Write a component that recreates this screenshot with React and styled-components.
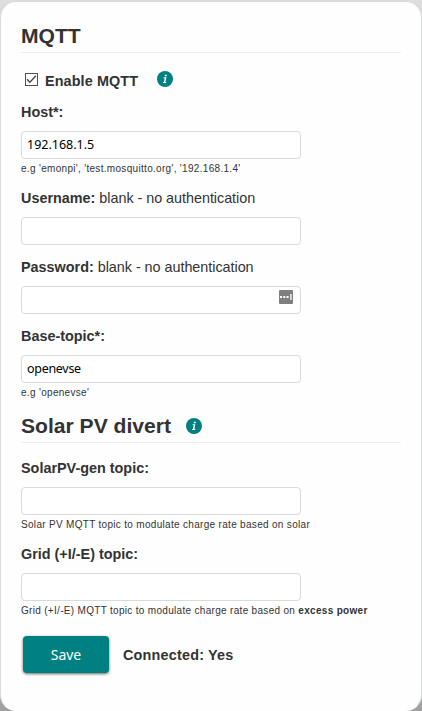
import React, { useState } from "react";
import styled, { createGlobalStyle } from "styled-components";

const Page = createGlobalStyle`
  *, *::before, *::after { box-sizing: border-box; }
  html, body { margin: 0; height: 711px; overflow: hidden; }
  body {
    background: linear-gradient(#dedede, #d2d2d2 40px, #c4c4c4 600px, #a0a0a0);
    color: #333;
    font-family: "Liberation Sans", Arial, sans-serif;
    font-size: 14.4px;
  }
`;

const Card = styled.main`
  width: 422px;
  height: 710px;
  margin-top: 1px;
  padding: 17px 20px 0;
  background: #fefefe;
  border: 1px solid #d9dada;
  border-bottom-color: #fefefe;
  border-radius: 16px;
`;

const Heading = styled.h2`
  display: flex;
  align-items: center;
  gap: 15px;
  height: 34px;
  margin: 0 0 ${(p) => p.$gap}px;
  border-bottom: 1px solid #eee;
  font-size: 21.1px;
  line-height: 30px;
  white-space: nowrap;
`;

const CheckRow = styled.div`
  display: flex;
  align-items: center;
  height: 20px;
  margin-bottom: 12px;
  padding-left: 4px;
`;

const CheckLabel = styled.label`
  display: flex;
  align-items: center;
  gap: 7px;
  margin-right: 19px;
  font-weight: bold;
  line-height: 20px;
  letter-spacing: 0.1px;
  white-space: nowrap;

  span { padding-top: 2px; }
`;

const HiddenCheck = styled.input`
  appearance: none;
  width: 0;
  height: 0;
  margin: 0 -7px 0 0;
`;

const Field = styled.div`
  display: flex;
  flex-direction: column;
  margin-bottom: ${(p) => p.$gap}px;
`;

const Label = styled.label`
  height: 20px;
  margin-bottom: 9px;
  line-height: 20px;
  white-space: nowrap;
`;

const Note = styled.span`
  letter-spacing: -0.04px;
`;

const InputBox = styled.div`
  display: flex;
  align-items: flex-start;
  width: 280px;
  height: 28px;
  padding: 0 7px 0 5px;
  background: #fff;
  border: 1px solid #d9dada;
  border-radius: 4px;
`;

const Input = styled.input`
  flex: 1;
  min-width: 0;
  height: 24px;
  padding: 0;
  background: none;
  border: 0;
  outline: 0;
  color: #000;
  font: 12.5px "Noto Sans", sans-serif;
  letter-spacing: ${(p) => p.$spacing || 0}px;
`;

const Hint = styled.small`
  height: 12px;
  margin-top: 4px;
  margin-bottom: -1px;
  font-size: 10px;
  line-height: 12px;
  letter-spacing: 0.31px;
  white-space: nowrap;
`;

const Actions = styled.div`
  display: flex;
  align-items: center;
  gap: 14px;
  margin: 20px 0 0 2px;
`;

const SaveButton = styled.button`
  width: 86px;
  height: 37px;
  padding: 0 0 1px;
  background: #008080;
  border: 0;
  border-radius: 4px;
  box-shadow: 0 1px 3px rgba(0, 0, 0, 0.6);
  color: #fff;
  font: 14px "Noto Sans", sans-serif;
`;

const Status = styled.strong`
  line-height: 20px;
  letter-spacing: 0.2px;
`;

const IconSvg = styled.svg`
  display: block;
  flex: none;
  margin-top: ${(p) => p.$top || 0}px;
`;

function InfoIcon({ top }) {
  return (
    <IconSvg $top={top} width="16" height="16" viewBox="0 0 16 16">
      <circle cx="8" cy="8" r="8" fill="#008080" />
      <path d="M8 3.7h2l-.4 1.6h-2zM6.7 6.3h2.7L8.4 11h1l-.2 1H6l.2-1h.7l.8-3.7h-1.2z" fill="#fff" />
    </IconSvg>
  );
}

function CheckIcon({ checked }) {
  return (
    <IconSvg width="13" height="13" viewBox="0 0 13 13" $top={-2}>
      <rect x=".5" y=".5" width="12" height="12" fill="#fff" stroke="#505050" />
      {checked && <path d="M2 6.3 4.9 9.2l6-6.4" fill="none" stroke="#444" strokeWidth="1.3" />}
    </IconSvg>
  );
}

function PasswordIcon() {
  return (
    <IconSvg $top={3} width="14" height="14" viewBox="0 0 14 14">
      <rect width="14" height="14" rx="1" fill="#7f7f7f" />
      <path d="M1 6h2v2H1zM4.3 6h2v2h-2zM7.6 6h2v2h-2zM11.3 4h1.3v6h-1.3z" fill="#fff" />
    </IconSvg>
  );
}

function TextField({ id, label, note, value = "", type = "text", inputSpacing, hint, gap, icon }) {
  return (
    <Field $gap={gap}>
      <Label htmlFor={id}><b>{label}</b>{note && <Note> {note}</Note>}</Label>
      <InputBox>
        <Input id={id} type={type} defaultValue={value} $spacing={inputSpacing} />
        {icon}
      </InputBox>
      {hint && <Hint>{hint}</Hint>}
    </Field>
  );
}

export default function App() {
  const [enabled, setEnabled] = useState(true);
  return (
    <>
      <Page />
      <Card>
        <Heading $gap={17}>MQTT</Heading>
        <CheckRow>
          <CheckLabel>
            <HiddenCheck type="checkbox" checked={enabled} onChange={() => setEnabled(!enabled)} />
            <CheckIcon checked={enabled} />
            <span>Enable MQTT</span>
          </CheckLabel>
          <InfoIcon top={-2} />
        </CheckRow>
        <TextField id="host" label="Host*:" value="192.168.1.5"
          hint="e.g 'emonpi', 'test.mosquitto.org', '192.168.1.4'" gap={14} />
        <TextField id="user" label="Username:" note="blank - no authentication" gap={12} />
        <TextField id="pass" type="password" label="Password:" note="blank - no authentication" gap={12} icon={<PasswordIcon />} />
        <TextField id="base" label="Base-topic*:" value="openevse" inputSpacing={-0.3} hint="e.g 'openevse'" gap={11} />
        <Heading $gap={15}>Solar PV divert<InfoIcon /></Heading>
        <TextField id="solar" label="SolarPV-gen topic:"
          hint="Solar PV MQTT topic to modulate charge rate based on solar" gap={14} />
        <TextField id="grid" label="Grid (+I/-E) topic:"
          hint={<>Grid (+I/-E) MQTT topic to modulate charge rate based on <b>excess power</b></>} gap={0} />
        <Actions>
          <SaveButton type="button">Save</SaveButton>
          <Status>Connected: Yes</Status>
        </Actions>
      </Card>
    </>
  );
}
